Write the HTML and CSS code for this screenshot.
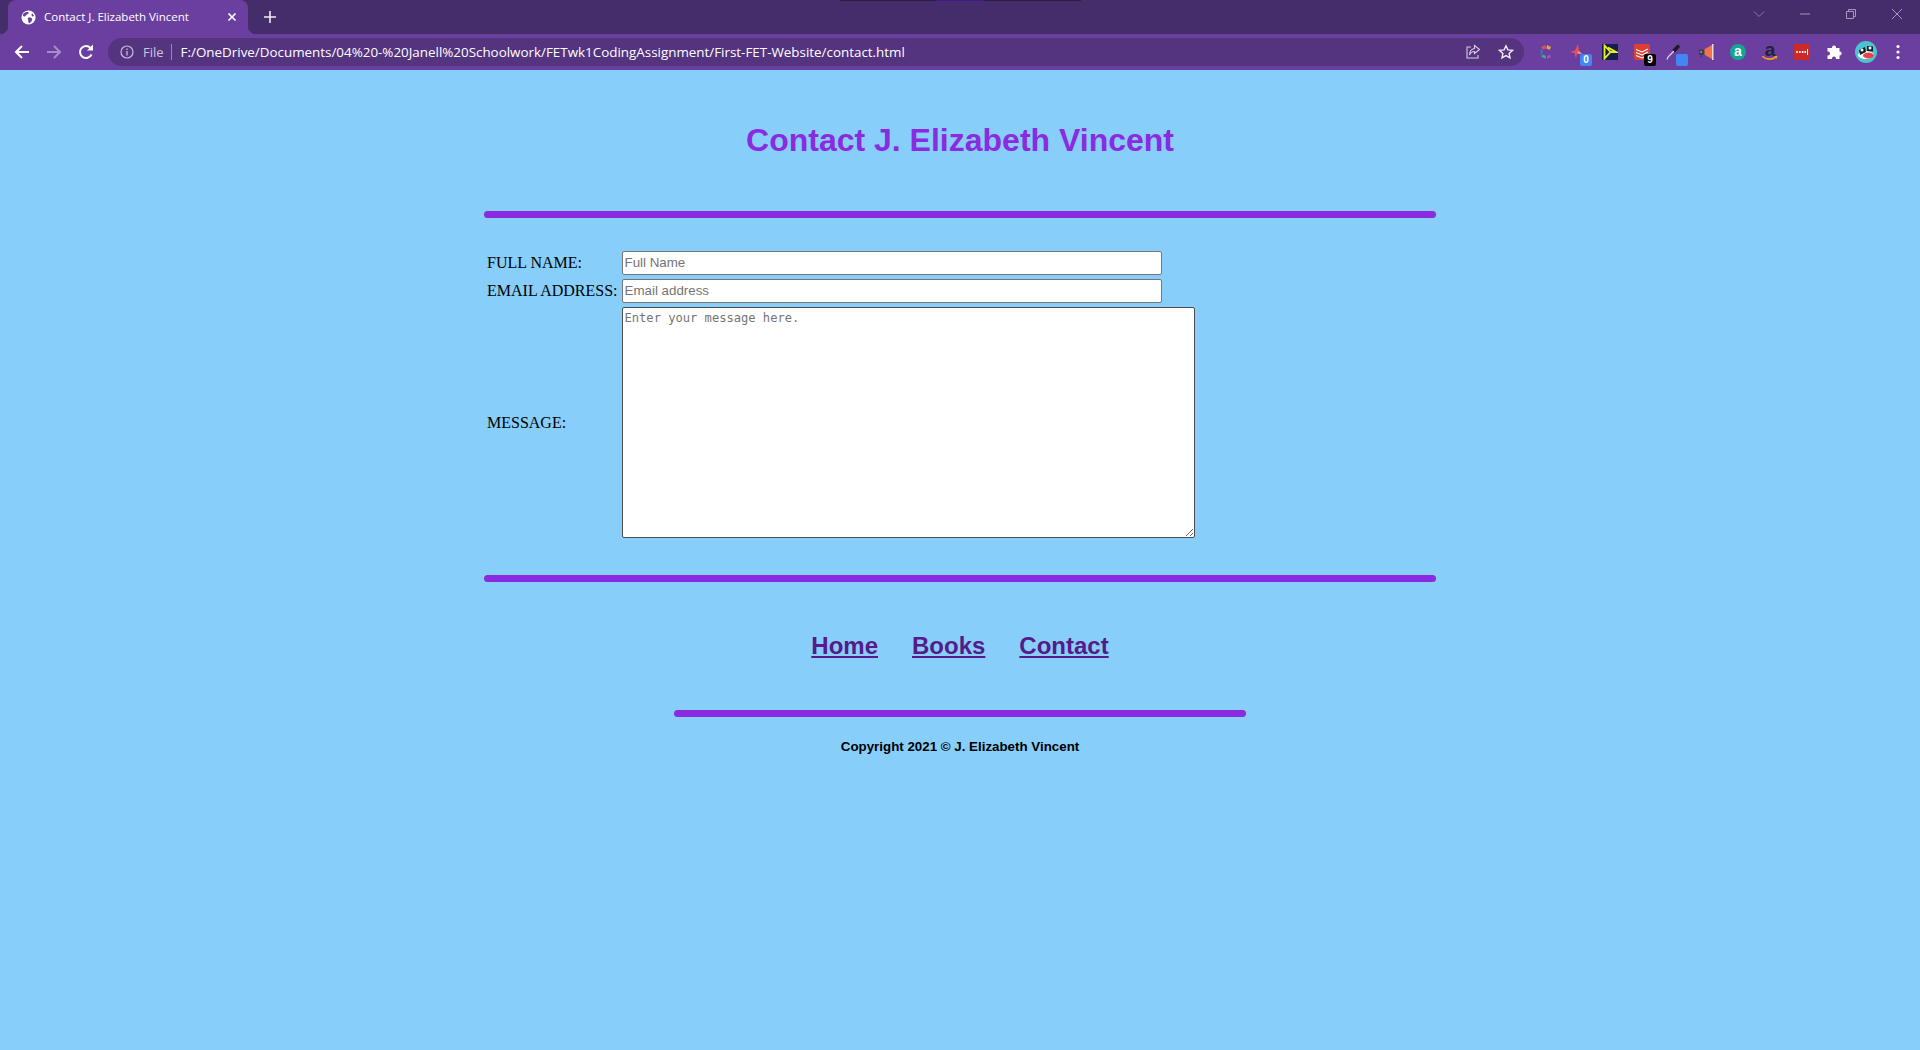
FILE: index.html
```html
<!DOCTYPE html>
<html lang="en">
<head>
    <meta charset="UTF-8">
    <title>Contact J. Elizabeth Vincent</title>
    <link rel="stylesheet" href="styles.css">
</head>
<body>
    <div class="browser">
        <div class="tabstrip">
            <div class="drag-line"><span></span></div>
            <div class="tab">
                <svg class="favicon" viewBox="0 0 16 16"><circle cx="8" cy="8" r="7.5" fill="#fff"/><path d="M3 3.500c2-1.500 4-1.500 5-1 .5 1.500-1 2-2 2.500S5 7 3.500 7 1.500 5 3 3.500zM8.500 8c2 0 3.500.5 3.500 2s-2 3.500-3.500 4c-1-1-.5-2.500-1-3.500S7 8 8.500 8zM12 3.500l2 3-2 .5-1-2z" fill="#6b3fa0"/></svg>
                <span class="tab-title">Contact J. Elizabeth Vincent</span>
                <svg class="tab-close" viewBox="0 0 10 10"><path d="M1.500 1.500l7 7M8.500 1.500l-7 7" stroke="#fff" stroke-width="1.700"/></svg>
            </div>
            <svg class="new-tab" viewBox="0 0 12 12"><path d="M6 0v12M0 6h12" stroke="#f0ecf5" stroke-width="1.600"/></svg>
            <div class="window-buttons">
                <svg viewBox="0 0 12 12" class="win-icon"><path d="M1 3.500l5 5 5-5" fill="none" stroke="#8b78a8"/></svg>
                <svg viewBox="0 0 12 12" class="win-icon"><path d="M1 6h10" stroke="#a698bc"/></svg>
                <svg viewBox="0 0 12 12" class="win-icon"><path d="M1.500 3.500h7v7h-7zM3.500 3.500v-2h7v7h-2" fill="none" stroke="#a698bc"/></svg>
                <svg viewBox="0 0 12 12" class="win-icon"><path d="M1 1l10 10M11 1L1 11" stroke="#a698bc"/></svg>
            </div>
        </div>
        <div class="toolbar">
            <svg class="nav-icon" viewBox="0 0 16 16"><path d="M15 8H2M8 2L2 8l6 6" fill="none" stroke="#fff" stroke-width="2"/></svg>
            <svg class="nav-icon" viewBox="0 0 16 16"><path d="M1 8h13M8 2l6 6-6 6" fill="none" stroke="#a78cc9" stroke-width="2"/></svg>
            <svg class="nav-icon" viewBox="0 0 16 16"><path d="M13.500 10.500A6 6 0 1 1 12.500 4" fill="none" stroke="#fff" stroke-width="2"/><path d="M9 6.500h6v-6z" fill="#fff"/></svg>
            <div class="omnibox">
                <svg class="info-icon" viewBox="0 0 14 14"><circle cx="7" cy="7" r="6" fill="none" stroke="#c9bcdb" stroke-width="1.200"/><path d="M7 6v4.500M7 3.500v1.400" stroke="#c9bcdb" stroke-width="1.300"/></svg>
                <span class="scheme">File</span>
                <span class="url">F:/OneDrive/Documents/04%20-%20Janell%20Schoolwork/FETwk1CodingAssignment/First-FET-Website/contact.html</span>
                <svg class="omni-icon share" viewBox="0 0 16 16"><path d="M6 3H2v11h11v-3" fill="none" stroke="#d5cbe2" stroke-width="1.100"/><path d="M9.500 1.500l5 4-5 4V7.500C7 7.500 5.500 8.500 4.500 11c0-4 2-6 5-6.500z" fill="none" stroke="#d5cbe2" stroke-width="1.100"/></svg>
                <svg class="omni-icon star" viewBox="0 0 16 16"><path d="M8 1.800l1.900 4.100 4.500.5-3.300 3 .9 4.400L8 11.600l-4 2.200.9-4.400-3.300-3 4.500-.5z" fill="none" stroke="#f0ecf5" stroke-width="1.400"/></svg>
            </div>
            <div class="extensions">
                <svg class="ext" viewBox="0 0 16 16"><path d="M7.500 1L3 3l2.200 2.500L8 4.500z" fill="#d9544d"/><path d="M9 1l-.5 3.500 3 1.500L13 3z" fill="#e8a33d"/><path d="M2.500 4.500l2.200 2v3L2.500 11.500z" fill="#3f6fc4"/><path d="M5 10.500L3 12.500 7.500 15l.5-3z" fill="#46a578"/><path d="M9 12l3-1.500L13 13l-4 2z" fill="#8e5bb5"/></svg>
                <div class="ext"><svg viewBox="0 0 16 16"><path d="M8 0l1 7 3 3-5-.5-1 5-1.500-5.500L0 8l5-1.500z" fill="#e8505b"/><path d="M9 7l3 3-5-.5z" fill="#f29a9f"/></svg><span class="badge blue">0</span></div>
                <svg class="ext" viewBox="0 0 16 16"><rect width="16" height="16" fill="#12204a"/><path d="M2.500 1.500v13L8.500 8zM6 3.500L14 8H8.500" fill="none" stroke="#e8f021" stroke-width="1.800"/></svg>
                <div class="ext"><svg viewBox="0 0 16 16"><rect width="16" height="16" rx="2" fill="#db4035"/><path d="M2 5.500l6 2.500 6-3M2 8.500l6 2.500 6-3M2 11.500l6 2.500 4-2" fill="none" stroke="#fff" stroke-width="1.100"/></svg><span class="badge black">9</span></div>
                <div class="ext"><svg viewBox="0 0 16 16"><path d="M1 15.500l1-2.500 6-6" fill="none" stroke="#e6e6e6" stroke-width="1.100"/><path d="M6.500 5.500L11 1c1.500-1 3.500 1 2.500 2.500L9 8.500z" fill="#1c1c24"/></svg><span class="badge square"></span></div>
                <svg class="ext" viewBox="0 0 16 16"><path d="M6 5.500l8-4.500v14l-8-4.500z" fill="#f0734a"/><rect x="14" y="0" width="1.500" height="16" fill="#f6d5cd"/><path d="M1 5.500h5.500v5.500H4v2.500H2.500V11H1z" fill="#36424f"/><circle cx="3" cy="8" r="1" fill="#8a98a8"/></svg>
                <div class="ext aliexpress">a</div>
                <div class="ext amazon"><span class="amazon-a">a</span><svg viewBox="0 0 16 6" class="smile"><path d="M0 0c4 4 10 4 14 1" fill="none" stroke="#f59b24" stroke-width="1.600"/><path d="M12 0l3.500 0-1 3z" fill="#f59b24"/></svg></div>
                <svg class="ext" viewBox="0 0 16 16"><rect width="16" height="16" rx="1" fill="#cc2929"/><circle cx="3" cy="8" r="1" fill="#fff"/><circle cx="5.800" cy="8" r="1" fill="#fff"/><circle cx="8.600" cy="8" r="1" fill="#fff"/><circle cx="11.200" cy="8" r="1" fill="#fff"/><path d="M13.500 5v6" stroke="#fff" stroke-width="1"/></svg>
                <svg class="ext puzzle" viewBox="0 0 16 16"><path d="M6 3.500a2 2 0 0 1 4 0V4h3.500v3.500h.2a2 2 0 0 1 0 4h-.2V15H10v-.5a2 2 0 0 0-4 0v.5H1.500v-3.500H2a2 2 0 0 0 0-4h-.5V4H6z" fill="#fff"/></svg>
                <svg class="avatar" viewBox="0 0 22 22"><circle cx="11" cy="11" r="11" fill="#4cc3d0"/><ellipse cx="11" cy="14" rx="8" ry="4" fill="#fff"/><path d="M4 9l6-3 1 5-6 3z" fill="#1b1d24"/><path d="M12 5l6 .5v5l-6-.5z" fill="#1b1d24"/><ellipse cx="13.500" cy="14.500" rx="5.500" ry="3" fill="#e8434b"/><circle cx="7" cy="9" r="1.500" fill="#fff"/><circle cx="15" cy="7" r="1.500" fill="#fff"/></svg>
                <svg class="menu-dots" viewBox="0 0 4 16"><circle cx="2" cy="2.500" r="1.600" fill="#fff"/><circle cx="2" cy="8" r="1.600" fill="#fff"/><circle cx="2" cy="13.500" r="1.600" fill="#fff"/></svg>
            </div>
        </div>
    </div>

    <div class="page">
        <h1>Contact J. Elizabeth Vincent</h1>
        <hr class="rule">
        <form class="contact-form">
            <table>
                <tr>
                    <td><label for="fullname">FULL NAME:</label></td>
                    <td><input type="text" id="fullname" placeholder="Full Name"></td>
                </tr>
                <tr>
                    <td><label for="email">EMAIL ADDRESS:</label></td>
                    <td><input type="text" id="email" placeholder="Email address"></td>
                </tr>
                <tr>
                    <td><label for="message">MESSAGE:</label></td>
                    <td><textarea id="message" placeholder="Enter your message here."></textarea></td>
                </tr>
            </table>
        </form>
        <hr class="rule">
        <nav class="links">
            <a href="#">Home</a>
            <a href="#">Books</a>
            <a href="#">Contact</a>
        </nav>
        <hr class="rule short">
        <p class="copyright">Copyright 2021 &copy; J. Elizabeth Vincent</p>
    </div>
</body>
</html>
```

FILE: styles.css
```css
body {
    margin: 0;
    background-color: #87cefa;
    font-family: "Liberation Serif", serif;
    color: #000;
}

/* browser window */
.browser {
    height: 70px;
    font-family: "Open Sans", "Liberation Sans", sans-serif;
    background-color: #6b3fa0;
}

.tabstrip {
    position: relative;
    height: 34px;
    display: flex;
    align-items: flex-end;
    background-color: #452c6a;
}

.drag-line {
    position: absolute;
    top: 0;
    left: 840px;
    width: 241px;
    height: 1px;
    background-color: #2b1d44;
}

.drag-line span {
    display: block;
    width: 48px;
    height: 1px;
    margin-left: 96px;
    background-color: #4a1590;
}

.tab {
    position: relative;
    width: 240px;
    height: 34px;
    margin-left: 8px;
    padding: 0 11px 0 13px;
    box-sizing: border-box;
    display: flex;
    align-items: center;
    background-color: #6b3fa0;
    border-radius: 8px 8px 0 0;
    color: #fff;
}

/* the flares at the bottom corners of the active tab */
.tab::before,
.tab::after {
    content: "";
    position: absolute;
    bottom: 0;
    width: 8px;
    height: 8px;
}

.tab::before {
    left: -8px;
    background: radial-gradient(circle at 0 0, #452c6a 8px, #6b3fa0 8.500px);
}

.tab::after {
    right: -8px;
    background: radial-gradient(circle at 100% 0, #452c6a 8px, #6b3fa0 8.500px);
}

.favicon {
    width: 15px;
    height: 15px;
    flex: none;
}

.tab-title {
    flex: 1;
    margin-left: 8px;
    padding-bottom: 2px;
    font-size: 11.500px;
    white-space: nowrap;
}

.tab-close {
    width: 10px;
    height: 10px;
    flex: none;
}

.new-tab {
    width: 12px;
    height: 12px;
    margin-left: 16px;
    align-self: center;
}

.window-buttons {
    margin-left: auto;
    align-self: flex-start;
    display: flex;
    gap: 34px;
    padding: 8px 17px 0 0;
}

.win-icon {
    width: 12px;
    height: 12px;
}

.toolbar {
    height: 36px;
    display: flex;
    align-items: center;
    padding-left: 14px;
    box-sizing: border-box;
    background-color: #6b3fa0;
}

.nav-icon {
    width: 16px;
    height: 16px;
    margin-right: 16px;
    flex: none;
}

.omnibox {
    width: 1416px;
    height: 28px;
    margin-left: -2px;
    padding: 0 10px 0 12px;
    box-sizing: border-box;
    display: flex;
    align-items: center;
    border-radius: 14px;
    background-color: #54337f;
    color: #fff;
}

.info-icon {
    width: 14px;
    height: 14px;
    flex: none;
}

.scheme {
    margin-left: 9px;
    padding-right: 7px;
    border-right: 1px solid #9c86b8;
    font-size: 13px;
    line-height: 16px;
    color: #cfc4de;
}

.url {
    margin-left: 9px;
    font-size: 13.400px;
    white-space: nowrap;
}

.omni-icon {
    width: 16px;
    height: 16px;
    flex: none;
}

.share {
    margin-left: auto;
}

.star {
    margin-left: 17px;
}

.extensions {
    display: flex;
    align-items: center;
    margin-left: 14px;
}

.ext {
    position: relative;
    display: block;
    width: 16px;
    height: 16px;
    margin-right: 16px;
    flex: none;
}

.ext svg {
    display: block;
    width: 16px;
    height: 16px;
}

.badge {
    position: absolute;
    right: -6px;
    bottom: -6px;
    min-width: 12px;
    height: 12px;
    border-radius: 2px;
    font-family: "Liberation Sans", sans-serif;
    font-size: 10px;
    font-weight: 700;
    line-height: 12px;
    text-align: center;
    color: #fff;
}

.badge.blue {
    background-color: #4285f4;
}

.badge.black {
    background-color: #000;
}

.badge.square {
    background-color: #4285f4;
}

.aliexpress {
    border-radius: 50%;
    background-color: #14a593;
    color: #fff;
    font-family: "Liberation Sans", sans-serif;
    font-size: 14px;
    font-weight: 700;
    line-height: 15px;
    text-align: center;
}

.amazon {
    text-align: center;
}

.amazon-a {
    display: block;
    font-family: "Liberation Sans", sans-serif;
    font-size: 19px;
    font-weight: 700;
    line-height: 12px;
    color: #1f2430;
}

.ext .smile {
    position: absolute;
    left: 0;
    bottom: -2px;
    height: 6px;
}

.avatar {
    width: 22px;
    height: 22px;
    margin: 0 19px 0 -3px;
    flex: none;
}

.menu-dots {
    width: 4px;
    height: 16px;
    flex: none;
}

/* page */
.page {
    padding: 0 8px;
    text-align: center;
}

h1 {
    margin: 0;
    padding: 52px 0;
    font-family: "Liberation Sans", sans-serif;
    font-size: 32px;
    line-height: 37px;
    font-weight: 700;
    color: #8a2be2;
}

.rule {
    width: 50%;
    height: 7px;
    margin: 0 auto;
    box-sizing: border-box;
    padding: 0;
    border: 0;
    border-radius: 4px;
    background-color: #8a2be2;
}

.contact-form {
    width: 50%;
    margin: 30px auto 34px;
    text-align: left;
}

.contact-form td {
    padding: 1px;
    font-size: 16px;
}

input {
    display: block;
    width: 540px;
    height: 24px;
    box-sizing: border-box;
    padding: 0 2px 2px;
    border: 1px solid #767676;
    border-radius: 2px;
    background: #fff;
    font-family: "Liberation Sans", sans-serif;
    font-size: 13.330px;
}

textarea {
    display: block;
    width: 573px;
    height: 231px;
    box-sizing: border-box;
    padding: 3px 2px 2px;
    border: 1px solid #4d4d4d;
    border-radius: 2px;
    background: #fff;
    font-family: "DejaVu Sans Mono", monospace;
    font-size: 12.100px;
}

.links {
    margin-top: 50px;
    display: flex;
    justify-content: center;
    gap: 34px;
}

.links a {
    font-family: "Liberation Sans", sans-serif;
    font-size: 24px;
    line-height: 28px;
    font-weight: 700;
    color: #551a8b;
}

.rule.short {
    width: 30%;
    margin-top: 50px;
}

.copyright {
    margin: 22px 0 0;
    font-family: "Liberation Sans", sans-serif;
    font-size: 13.330px;
    font-weight: 700;
}
```
